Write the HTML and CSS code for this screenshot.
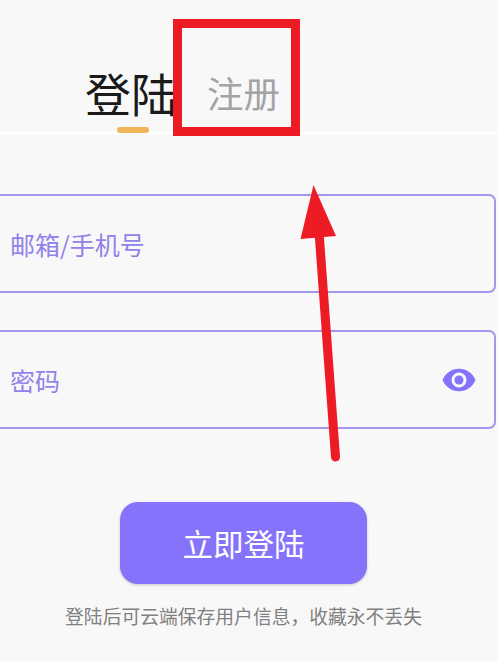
FILE: index.html
```html
<!DOCTYPE html>
<html lang="zh-CN">
<head>
    <meta charset="UTF-8">
    <meta name="viewport" content="width=device-width, initial-scale=1.0">
    <title>登陆</title>
    <link rel="stylesheet" href="styles.css">
</head>
<body>
    <div class="tabs">
        <div class="tab tab-active">登陆</div>
        <div class="tab">注册</div>
    </div>

    <div class="login-form">
        <div class="field"><span>邮箱/手机号</span></div>
        <div class="field">
            <span>密码</span>
            <svg class="eye" viewBox="0 0 24 24" width="36" height="36">
                <path fill-rule="evenodd" d="M12 4.5C7 4.5 2.73 7.61 1 12c1.73 4.39 6 7.5 11 7.5s9.27-3.11 11-7.5c-1.73-4.39-6-7.5-11-7.5zM12 17a5 5 0 1 1 0-10 5 5 0 0 1 0 10z"/>
                <circle cx="12" cy="12" r="3"/>
            </svg>
        </div>
        <button class="submit">立即登陆</button>
        <p class="hint">登陆后可云端保存用户信息，收藏永不丢失</p>
    </div>

    <!-- red marks drawn over the screenshot -->
    <div class="mark-box"></div>
    <svg class="mark-arrow" viewBox="0 0 498 661" width="498" height="661">
        <line x1="319" y1="232" x2="335.500" y2="457" stroke="#ed1c24" stroke-width="9" stroke-linecap="round"/>
        <polygon points="313.500,185 336,236 300.500,239" fill="#ed1c24"/>
    </svg>
</body>
</html>
```

FILE: styles.css
```css
html, body {
    height: 100%;
}
body {
    margin: 0;
    background: #f8f8f9;
    font-family: "Noto Sans CJK SC", "Noto Sans", sans-serif;
    overflow: hidden;
}
.tabs {
    height: 129px;
    display: flex;
    align-items: flex-end;
    gap: 30px;
    padding: 0 0 3px 85px;
    border-bottom: 2px solid #fff;
}
.tab {
    font-size: 36.500px;
    line-height: 52px;
    color: #a3a3a3;
    margin-bottom: 10px;
}
.tab-active {
    position: relative;
    font-size: 46px;
    line-height: 64px;
    color: #1a1a1a;
    margin-bottom: 5px;
}
.tab-active::after {
    content: "";
    position: absolute;
    left: 32px;
    bottom: -9px;
    width: 32px;
    height: 6px;
    border-radius: 3px;
    background: #f0b556;
}
.login-form {
    display: flex;
    flex-direction: column;
    align-items: center;
    padding: 60px 11px 0 0;
}
.field {
    align-self: flex-start;
    flex-shrink: 0;
    margin-left: -10px;
    width: 506px;
    height: 99px;
    box-sizing: border-box;
    margin-bottom: 37px;
    padding: 0 17px 0 18px;
    display: flex;
    align-items: center;
    justify-content: space-between;
    border: 2px solid #a297ec;
    border-radius: 7px;
    color: #9082e8;
    font-size: 25px;
}
.eye {
    fill: #8573fb;
}
.submit {
    width: 247px;
    height: 82px;
    margin-top: 36px;
    border: none;
    border-radius: 18px;
    background: #8573fb;
    box-shadow: 0 1px 3px rgba(0, 0, 0, 0.2);
    color: #fff;
    font-family: inherit;
    font-size: 30.500px;
}
.hint {
    margin: 18px 0 0;
    color: #808080;
    font-size: 18.800px;
    line-height: 28px;
}
.mark-box {
    position: absolute;
    left: 173px;
    top: 19px;
    width: 127px;
    height: 117px;
    box-sizing: border-box;
    border: 9px solid #ed1c24;
}
.mark-arrow {
    position: absolute;
    left: 0;
    top: 0;
}
```
